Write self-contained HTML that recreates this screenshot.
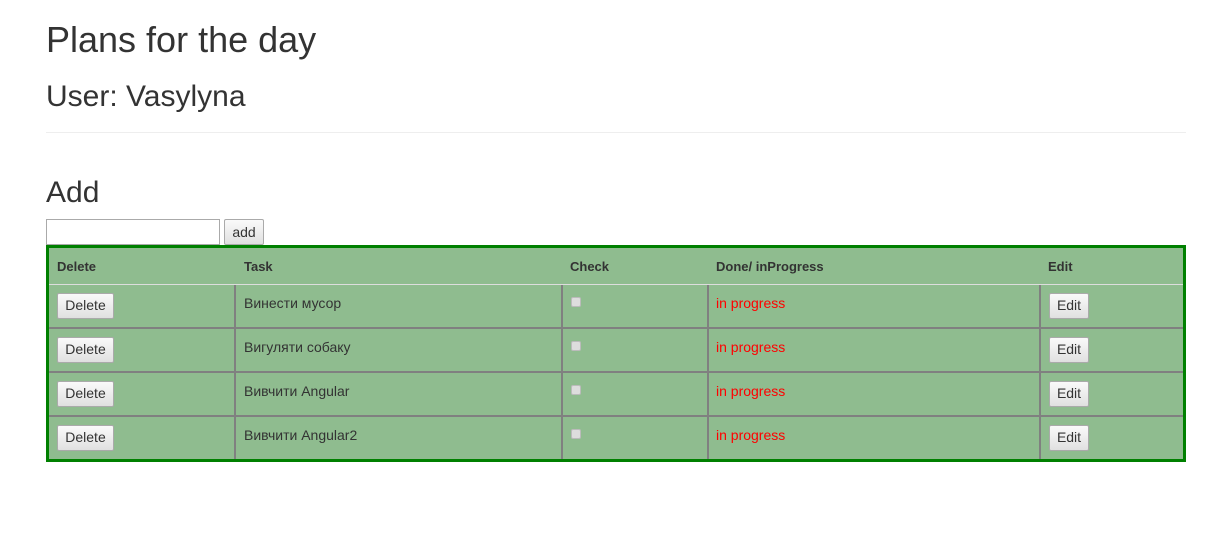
<!DOCTYPE html>
<html><head><meta charset="utf-8"><style>
body{margin:0;width:1228px;height:545px;background:#fff;font-family:"Liberation Sans",Arial,sans-serif;color:#333;position:relative;overflow:hidden}
.a{position:absolute}
h1{position:absolute;margin:0;font-weight:400;font-size:36px;left:46px;top:19px;line-height:42px}
h2{position:absolute;margin:0;font-weight:400;font-size:30px;left:46px;line-height:34px}
.btn{position:absolute;background:linear-gradient(#fafafa,#e0e0e0);border:1px solid #aaa;border-radius:2px;font-size:14px;color:#333;box-sizing:border-box;text-align:center;line-height:22px}
.th{position:absolute;top:259px;font-weight:bold;font-size:13px}
.td{position:absolute;font-size:14px}
.red{color:#f00}
.cb{position:absolute;width:10px;height:10px;background:#ddd;border:1px solid #bbb;border-radius:2px;box-sizing:border-box}
</style></head><body>
<h1>Plans for the day</h1>
<h2 style="top:80px;font-size:30px">User: Vasylyna</h2>
<div class="a" style="left:46px;top:132px;width:1140px;height:1px;background:#eee"></div>
<h2 style="top:176px">Add</h2>
<div class="a" style="left:46px;top:219px;width:174px;height:26px;border:1px solid #aaa;box-sizing:border-box"></div>
<div class="btn" style="left:224px;top:219px;width:40px;height:26px;line-height:24px">add</div>
<div class="a" style="left:46px;top:245px;width:1140px;height:217px;background:#8fbc8f;border:3px solid #008000;box-sizing:border-box"></div>
<div class="a" style="left:49px;top:284px;width:1134px;height:1px;background:#ddd"></div>
<div class="th" style="left:57px">Delete</div>
<div class="th" style="left:244px">Task</div>
<div class="th" style="left:570px">Check</div>
<div class="th" style="left:716px">Done/ inProgress</div>
<div class="th" style="left:1048px">Edit</div>
<!-- horizontal row lines -->
<div class="a" style="left:49px;top:327px;width:1134px;height:2px;background:#808080"></div>
<div class="a" style="left:49px;top:371px;width:1134px;height:2px;background:#808080"></div>
<div class="a" style="left:49px;top:415px;width:1134px;height:2px;background:#808080"></div>
<!-- vertical -->
<div class="a" style="left:234px;top:285px;width:2px;height:174px;background:#808080"></div>
<div class="a" style="left:561px;top:285px;width:2px;height:174px;background:#808080"></div>
<div class="a" style="left:707px;top:285px;width:2px;height:174px;background:#808080"></div>
<div class="a" style="left:1039px;top:285px;width:2px;height:174px;background:#808080"></div>

<div class="btn" style="left:57px;top:293px;width:57px;height:26px">Delete</div>
<div class="td" style="left:244px;top:295px">Винести мусор</div>
<div class="cb" style="left:571px;top:297px"></div>
<div class="td red" style="left:716px;top:295px">in progress</div>
<div class="btn" style="left:1049px;top:293px;width:40px;height:26px">Edit</div>

<div class="btn" style="left:57px;top:337px;width:57px;height:26px">Delete</div>
<div class="td" style="left:244px;top:339px">Вигуляти собаку</div>
<div class="cb" style="left:571px;top:341px"></div>
<div class="td red" style="left:716px;top:339px">in progress</div>
<div class="btn" style="left:1049px;top:337px;width:40px;height:26px">Edit</div>

<div class="btn" style="left:57px;top:381px;width:57px;height:26px">Delete</div>
<div class="td" style="left:244px;top:383px">Вивчити Angular</div>
<div class="cb" style="left:571px;top:385px"></div>
<div class="td red" style="left:716px;top:383px">in progress</div>
<div class="btn" style="left:1049px;top:381px;width:40px;height:26px">Edit</div>

<div class="btn" style="left:57px;top:425px;width:57px;height:26px">Delete</div>
<div class="td" style="left:244px;top:427px">Вивчити Angular2</div>
<div class="cb" style="left:571px;top:429px"></div>
<div class="td red" style="left:716px;top:427px">in progress</div>
<div class="btn" style="left:1049px;top:425px;width:40px;height:26px">Edit</div>
</body></html>
